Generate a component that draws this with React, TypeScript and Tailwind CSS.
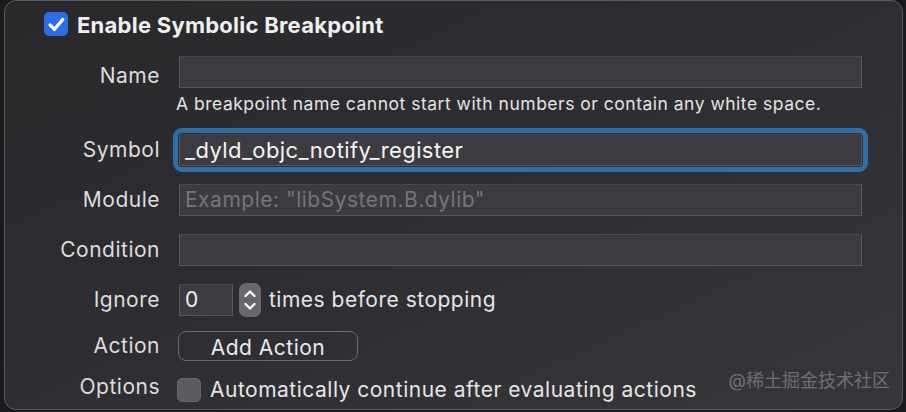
import React from 'react';

const font = { fontFamily: 'Inter, "Noto Sans CJK SC", sans-serif' };

const Label = ({ children, className = '' }: { children: React.ReactNode; className?: string }) => (
  <div className={`w-[155px] shrink-0 text-right text-[21px] leading-[24px] tracking-[0.5px] text-[#dddcdf] ${className}`}>
    {children}
  </div>
);

const Field = ({ children, className = '' }: { children?: React.ReactNode; className?: string }) => (
  <div
    className={`flex items-center h-[32px] bg-[#3c3b3f] border border-[#58575b] border-t-[#4a494d] px-[5px] text-[21px] tracking-[0.5px] ${className}`}
  >
    {children}
  </div>
);

const Check = () => (
  <svg width="17" height="15" viewBox="0 0 17 15">
    <path d="M2.2 8 L6.5 12.3 L14.8 2.4" fill="none" stroke="white" strokeWidth="3.2" strokeLinecap="round" strokeLinejoin="round" />
  </svg>
);

export default function App() {
  return (
    <div className="w-[906px] h-[412px] bg-[#1a1a1c] overflow-hidden pl-[4px] pr-[3px] pb-[2px]" style={font}>
      <div className="relative h-full rounded-[12px] border border-[#5c5b5f] bg-gradient-to-br from-[#29282b] via-[#2e2d31] to-[#37363c] pt-[11px] pr-[40px] flex flex-col">
        {/* title */}
        <div className="flex items-center h-[24px] pl-[39px] gap-[9px]">
          <div className="w-[24px] h-[24px] rounded-[5px] bg-[#2d6ee4] flex items-center justify-center">
            <Check />
          </div>
          <span className="mt-[1px] text-[22px] leading-[24px] font-bold text-[#efeef1] tracking-[0.25px]">
            Enable Symbolic Breakpoint
          </span>
        </div>

        {/* name */}
        <div className="flex items-center gap-[19px] mt-[20px]">
          <Label className="mt-[8px]">Name</Label>
          <Field className="flex-1" />
        </div>
        <div className="flex items-center h-[32px] pl-[171px] text-[17.5px] tracking-[0.5px] text-[#e4e3e6]">
          A breakpoint name cannot start with numbers or contain any white space.
        </div>

        {/* symbol */}
        <div className="flex items-center gap-[19px] mt-[14px]">
          <Label>Symbol</Label>
          <Field className="flex-1 !text-[22px] !tracking-[0.4px] text-[#f4f4f6] outline-[5px] outline outline-offset-[1px] outline-[#2f6fa6] rounded-[3px]">
            _dyld_objc_notify_register
          </Field>
        </div>

        {/* module */}
        <div className="flex items-center gap-[19px] mt-[18px]">
          <Label>Module</Label>
          <Field className="flex-1 text-[#76757a]">Example: "libSystem.B.dylib"</Field>
        </div>

        {/* condition */}
        <div className="flex items-center gap-[19px] mt-[18px]">
          <Label>Condition</Label>
          <Field className="flex-1" />
        </div>

        {/* ignore */}
        <div className="flex items-center gap-[19px] mt-[17px]">
          <Label>Ignore</Label>
          <div className="flex items-center">
            <Field className="w-[54px] text-[#f0eff2]">0</Field>
            <div className="ml-[6px] w-[22px] h-[34px] rounded-[7px] bg-[#69686c] flex flex-col items-center justify-center">
              <svg width="14" height="28" viewBox="0 0 14 28">
                <path d="M2.5 10 L7 5.5 L11.5 10" fill="none" stroke="white" strokeWidth="2.2" strokeLinecap="round" strokeLinejoin="round" />
                <line x1="0" y1="14" x2="14" y2="14" stroke="#5a595d" strokeWidth="1" />
                <path d="M2.5 18 L7 22.5 L11.5 18" fill="none" stroke="white" strokeWidth="2.2" strokeLinecap="round" strokeLinejoin="round" />
              </svg>
            </div>
            <span className="ml-[8px] text-[21px] tracking-[0.5px] text-[#e6e5e8]">times before stopping</span>
          </div>
        </div>

        {/* action */}
        <div className="flex items-center gap-[18px] mt-[14px]">
          <Label>Action</Label>
          <button className="w-[180px] h-[30px] rounded-[8px] border-[1.5px] border-[#6b6a6e] text-[21px] tracking-[0.5px] text-[#ebeaed]">
            Add Action
          </button>
        </div>

        {/* options */}
        <div className="flex items-center gap-[17px] mt-[13px]">
          <Label className="-mt-[5px]">Options</Label>
          <div className="w-[24px] h-[24px] rounded-[5px] bg-[#5c5b5f] border border-[#666569]" />
          <span className="ml-[-8px] text-[21px] tracking-[0.5px] text-[#e6e5e8]">
            Automatically continue after evaluating actions
          </span>
        </div>

        <div className="absolute right-[12px] bottom-[15px] text-[18px] text-white/30">@稀土掘金技术社区</div>
      </div>
    </div>
  );
}
